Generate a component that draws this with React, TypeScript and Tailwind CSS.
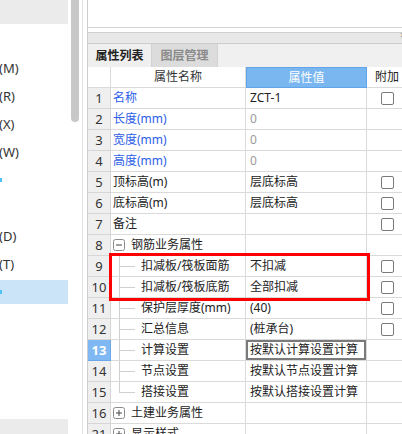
import React from "react";

type Row = {
  no: string;
  name: string;
  value?: string;
  kind?: "blue" | "group" | "child" | "plain";
  muted?: boolean;
  check?: boolean;
  open?: boolean;
  last?: boolean;
  selected?: boolean;
};

const rows: Row[] = [
  { no: "1", name: "名称", value: "ZCT-1", kind: "blue", check: true },
  { no: "2", name: "长度(mm)", value: "0", kind: "blue", muted: true },
  { no: "3", name: "宽度(mm)", value: "0", kind: "blue", muted: true },
  { no: "4", name: "高度(mm)", value: "0", kind: "blue", muted: true },
  { no: "5", name: "顶标高(m)", value: "层底标高", check: true },
  { no: "6", name: "底标高(m)", value: "层底标高", check: true },
  { no: "7", name: "备注", value: "", check: true },
  { no: "8", name: "钢筋业务属性", kind: "group", open: true },
  { no: "9", name: "扣减板/筏板面筋", value: "不扣减", kind: "child", check: true },
  { no: "10", name: "扣减板/筏板底筋", value: "全部扣减", kind: "child", check: true },
  { no: "11", name: "保护层厚度(mm)", value: "(40)", kind: "child", check: true },
  { no: "12", name: "汇总信息", value: "(桩承台)", kind: "child", check: true },
  { no: "13", name: "计算设置", value: "按默认计算设置计算", kind: "child", selected: true },
  { no: "14", name: "节点设置", value: "按默认节点设置计算", kind: "child" },
  { no: "15", name: "搭接设置", value: "按默认搭接设置计算", kind: "child", last: true },
  { no: "16", name: "土建业务属性", kind: "group" },
  { no: "21", name: "显示样式", kind: "group" },
];

const leftItems = ["(M)", "(R)", "(X)", "(W)", "mark", "", "(D)", "(T)", "sel"];

const Checkbox = () => (
  <div className="w-[13px] h-[13px] border border-[#7a7a7a] rounded-[2px] bg-white" />
);

const ExpandBox = ({ open }: { open?: boolean }) => (
  <svg width="12" height="12" viewBox="0 0 12 12" className="shrink-0">
    <rect x="0.5" y="0.5" width="11" height="11" rx="2" fill="white" stroke="#8a8a8a" />
    <line x1="3" y1="6" x2="9" y2="6" stroke="#444" />
    {!open && <line x1="6" y1="3" x2="6" y2="9" stroke="#444" />}
  </svg>
);

const LeftPanel = () => (
  <div className="w-[83px] h-full border-r border-[#e2e2e2] flex shrink-0">
    <div className="w-[68px] h-full flex flex-col">
      <div className="h-[24px] bg-[#ebebeb]" />
      <div className="h-[30px]" />
      {leftItems.map((item, i) => (
        <div key={i} className="h-[28px] flex items-center text-[13px] text-[#333]">
          {item === "mark" && <div className="w-[2px] h-[4px] bg-[#4fc3f7]" />}
          {item === "sel" && (
            <div className="h-[24px] w-full bg-[#cce4f7] flex items-center">
              <div className="w-[2px] h-[4px] bg-[#4fc3f7]" />
            </div>
          )}
          {item !== "mark" && item !== "sel" && <span className="-ml-[1px]">{item}</span>}
        </div>
      ))}
      <div className="mt-auto h-[15px] bg-[#ebebeb]" />
    </div>
    <div className="w-[3px]" />
    <div className="w-[8px] h-[122px] bg-[#c8c8c8] rounded-b-[4px]" />
  </div>
);

const NameCell = ({ row }: { row: Row }) => {
  if (row.kind === "group") {
    return (
      <div className="flex items-center h-full pl-[2px] gap-[6px] text-[#222]">
        <ExpandBox open={row.open} />
        <span>{row.name}</span>
      </div>
    );
  }
  if (row.kind === "child") {
    return (
      <div className="relative h-full flex items-center pl-[30px] text-[#222]">
        <div
          className={`absolute left-[8px] top-0 w-px bg-[#cfcfcf] ${
            row.last ? "h-1/2" : "h-full"
          }`}
        />
        <div className="absolute left-[8px] top-1/2 w-[16px] h-px bg-[#cfcfcf]" />
        <span>{row.name}</span>
      </div>
    );
  }
  return (
    <div
      className={`h-full flex items-center pl-[2px] ${
        row.kind === "blue" ? "text-[#2c5ee8]" : "text-[#222]"
      }`}
    >
      {row.name}
    </div>
  );
};

const TableRow = ({ row }: { row: Row }) => (
  <div className="flex h-[21px] shrink-0">
    <div
      className={`w-[23px] h-full border-r border-b flex items-center justify-center text-[13px] ${
        row.selected
          ? "bg-[#7fb8f2] border-[#6aa8ea] text-white font-bold"
          : "bg-[#efefef] border-[#d6d6d6] text-[#333]"
      }`}
    >
      {row.no}
    </div>
    <div className="w-[135px] h-full border-r border-b border-[#dadada] whitespace-nowrap overflow-hidden">
      <NameCell row={row} />
    </div>
    <div
      className={`relative w-[121px] h-full border-r border-b border-[#dadada] flex items-center pl-[4px] whitespace-nowrap ${
        row.muted ? "text-[#9a9a9a]" : "text-[#222]"
      }`}
    >
      {row.selected && (
        <div className="absolute left-0 top-0 right-0 bottom-0 border-2 border-[#7a7a7a]" />
      )}
      {row.value}
    </div>
    <div className="w-[40px] h-full border-b border-[#dadada] flex items-center justify-center shrink-0">
      {row.check && <Checkbox />}
    </div>
  </div>
);

const RightPanel = () => (
  <div className="flex-1 h-full border-l border-[#cfcfcf] flex flex-col overflow-hidden">
    <div className="h-[28px] border-b border-[#d4d4d4] shrink-0" />
    <div className="h-[4px] shrink-0" />
    <div className="h-[11px] border-t border-[#d0d0d0] bg-[#e8e8e8] shrink-0 relative">
      <span className="absolute -right-[4px] -top-[4px] text-[11px] text-[#999]">×</span>
    </div>
    <div className="h-[24px] border-t border-[#cccccc] bg-[#f0f0f0] flex shrink-0 text-[12px] font-bold">
      <div className="w-[64px] h-full bg-[#efefef] border-r border-[#d2d2d2] flex items-center justify-center text-[#222]">
        属性列表
      </div>
      <div className="w-[66px] h-full bg-[#dcdcdc] border-r border-[#d2d2d2] flex items-center justify-center text-[#8a8a8a]">
        图层管理
      </div>
    </div>
    <div className="relative flex flex-col text-[12px] w-[319px]">
      <div className="flex h-[21px] shrink-0">
        <div className="w-[23px] h-full border-r border-b border-[#dadada] bg-white" />
        <div className="w-[135px] h-full border-r border-b border-[#dadada] flex items-center justify-center text-[#333]">
          属性名称
        </div>
        <div className="w-[121px] h-full border border-[#62a4e8] bg-[#7ab6f0] flex items-center justify-center text-white">
          属性值
        </div>
        <div className="w-[40px] h-full border-b border-[#dadada] flex items-center justify-center text-[#222]">
          附加
        </div>
      </div>
      {rows.map((row) => (
        <TableRow key={row.no} row={row} />
      ))}
      <div className="absolute left-[21px] top-[186px] w-[261px] h-[48px] border-[3px] border-[#ff0000]" />
    </div>
  </div>
);

export default function App() {
  return (
    <div
      className="w-[402px] h-[434px] overflow-hidden bg-white flex leading-none"
      style={{ fontFamily: '"Noto Sans", "Noto Sans CJK SC", sans-serif' }}
    >
      <LeftPanel />
      <div className="w-[4px] shrink-0" />
      <RightPanel />
    </div>
  );
}
